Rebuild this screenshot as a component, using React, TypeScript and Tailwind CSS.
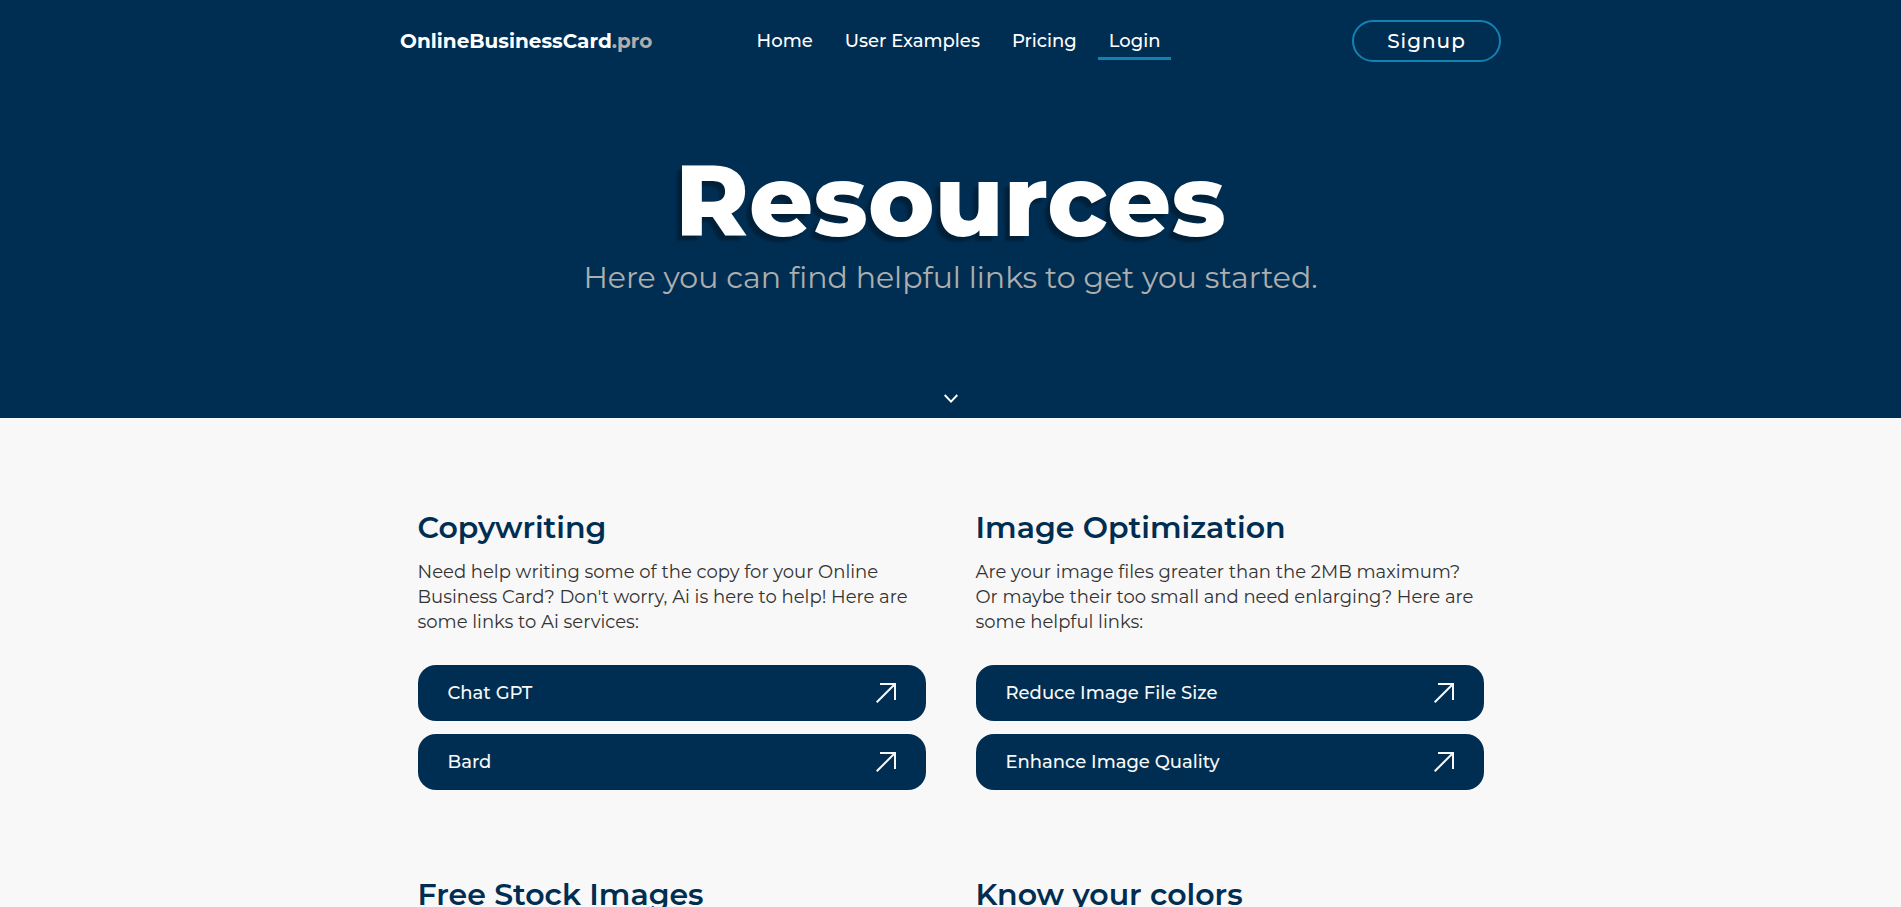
type Resource = { title: string; lines: string[]; links: string[] };

const resources: Resource[] = [
  {
    title: "Copywriting",
    lines: [
      "Need help writing some of the copy for your Online",
      "Business Card? Don't worry, Ai is here to help! Here are",
      "some links to Ai services:",
    ],
    links: ["Chat GPT", "Bard"],
  },
  {
    title: "Image Optimization",
    lines: [
      "Are your image files greater than the 2MB maximum?",
      "Or maybe their too small and need enlarging? Here are",
      "some helpful links:",
    ],
    links: ["Reduce Image File Size", "Enhance Image Quality"],
  },
  { title: "Free Stock Images", lines: [], links: [] },
  { title: "Know your colors", lines: [], links: [] },
];

const navItems = ["Home", "User Examples", "Pricing", "Login"];

function ArrowIcon() {
  return (
    <svg width="20" height="20" viewBox="0 0 20 20" fill="none" stroke="#f8f8f8" strokeWidth="2" aria-hidden="true">
      <path d="M4 1H19V17" />
      <path d="M0.7 19.3L19 1" />
    </svg>
  );
}

function Header() {
  return (
    <header className="mx-auto grid h-[82px] w-full max-w-[1101px] grid-cols-[1fr_auto_1fr] items-center">
      <a href="#" className="text-[20px] font-bold whitespace-nowrap text-white">
        OnlineBusinessCard<span className="text-[#aeaeae]">.pro</span>
      </a>
      <nav className="flex gap-[10px] pl-4">
        {navItems.map((item) => (
          <a
            key={item}
            href="#"
            className={
              item === "Login"
                ? "border-b-[3px] border-[#1282b2] px-[11px] pt-[6px] pb-[2px] text-[18px] leading-[27px] font-medium whitespace-nowrap text-white"
                : "border-b-[3px] border-transparent px-[11px] pt-[6px] pb-[2px] text-[18px] leading-[27px] font-medium whitespace-nowrap text-white"
            }
          >
            {item}
          </a>
        ))}
      </nav>
      <a
        href="#"
        className="flex h-[42px] w-[149px] items-center justify-center justify-self-end rounded-full border-2 border-[#1282b2] text-[20px] font-medium tracking-[1px] text-white"
      >
        Signup
      </a>
    </header>
  );
}

function ResourceCard({ title, lines, links }: Resource) {
  return (
    <section>
      <h2 className="text-[30px] leading-10 font-semibold text-[#002e52]">{title}</h2>
      <p className="mt-3 text-[18px] leading-[25px] text-[#333333]">
        {lines.map((line) => (
          <span key={line} className="block">
            {line}
          </span>
        ))}
      </p>
      <ul className="mt-[30px] flex flex-col gap-[13px]">
        {links.map((link) => (
          <li key={link}>
            <a
              href="#"
              className="flex h-14 items-center justify-between rounded-[18px] bg-[#002e52] px-[30px] text-[18px] font-medium text-[#f8f8f8]"
            >
              {link}
              <ArrowIcon />
            </a>
          </li>
        ))}
      </ul>
    </section>
  );
}

export default function App() {
  return (
    <div className="h-screen overflow-hidden bg-[#f8f8f8] font-[Montserrat,Inter,sans-serif]">
      <div className="bg-[#002e52]">
        <Header />
        <div className="flex flex-col items-center pt-[58px] pb-[14px] text-center">
          <h1 className="text-[100px] leading-[120px] font-extrabold text-white [text-shadow:-5px_5px_3px_rgba(0,0,0,0.3)]">
            Resources
          </h1>
          <p className="mt-[2px] text-[30px] leading-8 font-normal text-[#aeaeae]">
            Here you can find helpful links to get you started.
          </p>
          <svg className="mt-[100px]" width="14" height="10" viewBox="0 0 14 10" fill="none" stroke="#ffffff" strokeWidth="2" aria-hidden="true">
            <path d="M0.7 1L7 7.6L13.3 1" />
          </svg>
        </div>
      </div>
      <main className="mx-auto grid w-full max-w-[1066px] grid-cols-2 gap-x-[50px] gap-y-[85px] pt-[90px]">
        {resources.map((resource) => (
          <ResourceCard key={resource.title} {...resource} />
        ))}
      </main>
    </div>
  );
}
